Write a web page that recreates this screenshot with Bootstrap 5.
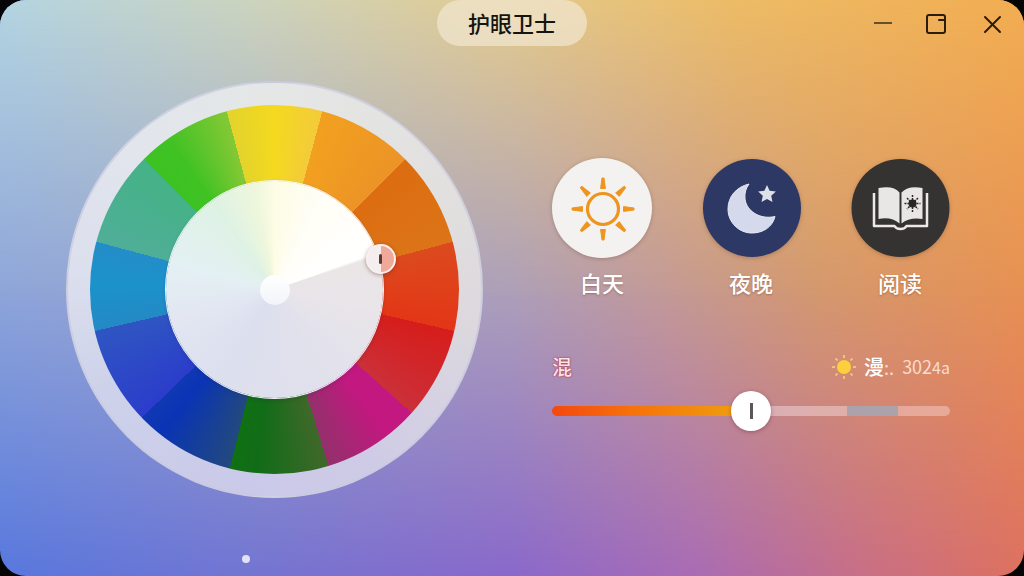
<!DOCTYPE html>
<html lang="zh-CN">
<head>
<meta charset="utf-8">
<meta name="viewport" content="width=device-width, initial-scale=1">
<title>护眼卫士</title>
<link rel="stylesheet" href="https://cdn.jsdelivr.net/npm/bootstrap@5.3.0/dist/css/bootstrap.min.css">
<style>
  body {
    background: #050505;
    font-family: "Noto Sans CJK SC", sans-serif;
  }
  /* Window background: three horizontal ramps blended from top to bottom */
  .app-window {
    isolation: isolate;
    border-radius: 26px;
    background: linear-gradient(90deg, #5878de 0%, #7475d2 25%, #8a69cb 50%, #aa6cb4 68%, #c86f87 84%, #de7160 100%);
  }
  .app-window::before, .app-window::after {
    content: "";
    position: absolute;
    inset: 0;
    z-index: -1;
  }
  .app-window::before {
    background: linear-gradient(90deg, #8ea5d9 0%, #9aa3cb 25%, #ad9fb9 50%, #c09a9c 63%, #d4986f 80%, #e79053 100%);
    -webkit-mask-image: linear-gradient(#000 50%, transparent 100%);
    mask-image: linear-gradient(#000 50%, transparent 100%);
  }
  .app-window::after {
    background: linear-gradient(90deg, #b3d4e1 0%, #ccd3bd 25%, #e1cb92 48%, #ecbb66 72%, #f2ad51 100%);
    -webkit-mask-image: linear-gradient(#000 0%, transparent 52%);
    mask-image: linear-gradient(#000 0%, transparent 52%);
  }

  .title-bar { display: grid; grid-template-columns: 1fr 150px 1fr; }
  .title-pill {
    grid-column: 2;
    height: 46px;
    padding-bottom: 2px;
    border-radius: 23px;
    background: rgba(240, 230, 206, .74);
    color: #16140f;
    font-size: 22px;
    font-weight: 500;
  }
  .win-btn { width: 40px; height: 40px; color: #2b1c0c; }
  .win-controls { gap: 15px; padding-right: 12px; }

  .panels {
    display: grid;
    grid-template-columns: 417fr 398fr;
    column-gap: 69px;
    padding: 0 74px 0 66px;
  }

  .dial-ring {
    aspect-ratio: 1;
    padding: 22px;
    background: conic-gradient(#e5e7e6, #e2e0de 60deg, #dcd8de 100deg, #cfcbe6 150deg, #cac9e9 190deg, #cdd2ea 240deg, #dcdfed 275deg, #e2e6ec 320deg, #e5e7e6);
    border: 2px solid rgba(200, 202, 222, .75);
    max-width: 560px;
  }
  .dial-hues {
    padding: 76px;
    background: conic-gradient(
      #f4d91f 0deg, #f3cb3b 15deg,
      #f2a01f 15deg, #ec9427 45deg,
      #dc6d10 45deg, #dc7418 75deg,
      #dc4a1e 75deg, #e33617 103deg,
      #d61d1b 103deg, #cb3039 132deg,
      #c4187f 132deg, #c2187f 142deg, #93306c 163deg,
      #40682a 163deg, #126c18 185deg, #107013 194deg,
      #22497e 194deg, #0a34b4 218deg, #1038b4 226deg,
      #2b3dcb 226deg, #2f55c2 257deg,
      #2489c5 257deg, #1b92cb 272deg, #248dc8 285deg,
      #4fae98 285deg, #45b286 315deg,
      #3bc322 315deg, #41c224 325deg, #85c835 345deg,
      #e3d32c 345deg, #f4d91f 360deg);
  }
  .dial-core {
    background: conic-gradient(#fdfce4 0deg, #fffef6 25deg, #ffffff 70deg, #eae5e7 72deg, #e9e5e9 100deg, #e1e1ec 150deg, #dcdfee 210deg, #e2e7f2 255deg, #e4f0f3 285deg, #def2e4 325deg, #eff7dc 350deg, #fdfce4 360deg);
    box-shadow: 0 0 0 1px #f4f6fa, 0 2px 4px rgba(40, 30, 80, .25);
  }
  .dial-hub { width: 30px; height: 30px; background: linear-gradient(#fff, #f1f4fa); }
  /* The handle rides on the edge of the core */
  .dial-handle {
    left: 99%;
    top: 36%;
    width: 30px;
    height: 30px;
    border: 2px solid #fbeeee;
    background: linear-gradient(90deg, #f4eeee 50%, #f0a898 50%);
    box-shadow: 0 1px 4px rgba(80, 40, 20, .45);
  }
  .dial-handle::after { content: ""; width: 3px; height: 10px; background: #5a3a32; border-radius: 2px; }

  .controls { padding-top: 10px; }
  .mode-btn { width: 100px; color: #fff; font-size: 22px; font-weight: 500; line-height: 28px; }
  .mode-btn svg { filter: drop-shadow(0 1px 2px rgba(80, 50, 40, .3)); }
  .mode-name { margin-top: 6px; text-shadow: 0 1px 2px rgba(110, 60, 50, .45); }

  .level-row { margin-top: 58px; line-height: 24px; font-size: 20px; }
  .level-name { color: #fbe3e6; font-weight: 500; text-shadow: 0 0 2px #b0283c, 0 0 1px #b0283c; }
  .level-text { color: #fff; font-weight: 500; }
  .level-num { color: #f8dcd0; font-size: 18px; }
  .level-unit { font-size: 16px; }

  .level-slider {
    -webkit-appearance: none;
    appearance: none;
    height: 40px;
    margin-top: 12px;
    background: transparent;
  }
  .level-slider::-webkit-slider-runnable-track {
    height: 10px;
    border-radius: 5px;
    background: linear-gradient(90deg, #f4480f 0%, #f5720c 20%, #f09a10 45%, #e8b010 50%, rgba(240, 215, 218, .5) 50%, rgba(240, 215, 218, .5) 74%, #aba2ab 74%, #aba2ab 87%, rgba(244, 205, 200, .5) 87%);
  }
  .level-slider::-webkit-slider-thumb {
    -webkit-appearance: none;
    width: 40px;
    height: 40px;
    margin-top: -15px;
    border-radius: 50%;
    background: linear-gradient(#5c5658, #5c5658) center / 3px 16px no-repeat #fff;
    box-shadow: 0 1px 4px rgba(80, 30, 50, .4);
  }

  .page-dots { height: 43px; padding: 8px 0 0 242px; }
  .page-dot { width: 8px; height: 8px; background: #e2e2f6; }

  @media (max-width: 800px) {
    .panels { grid-template-columns: 1fr; padding: 24px; row-gap: 24px; }
  }
</style>
</head>
<body>
<div class="app-window position-relative overflow-hidden min-vh-100 d-flex flex-column">

  <header class="title-bar">
    <h1 class="title-pill d-flex align-items-center justify-content-center m-0">护眼卫士</h1>
    <div class="win-controls d-flex justify-content-end align-items-center">
      <button type="button" class="win-btn btn border-0 p-0" aria-label="最小化">
        <svg width="24" height="24" viewBox="0 0 24 24" fill="none" stroke="currentColor" stroke-width="2"><path d="M4 11h18" stroke="#66502c"/></svg>
      </button>
      <button type="button" class="win-btn btn border-0 p-0" aria-label="最大化">
        <svg width="24" height="24" viewBox="0 0 24 24" fill="none" stroke="currentColor" stroke-width="2" stroke-linecap="round"><rect x="2" y="3" width="18" height="18" rx="2"/><path d="M14 8h5"/></svg>
      </button>
      <button type="button" class="win-btn btn border-0 p-0" aria-label="关闭">
        <svg width="24" height="24" viewBox="0 0 24 24" fill="none" stroke="currentColor" stroke-width="2" stroke-linecap="round"><path d="M5 5l15 15M20 5L5 20"/></svg>
      </button>
    </div>
  </header>

  <main class="panels flex-grow-1 align-items-center">
    <section class="dial-ring rounded-circle" aria-label="色温">
      <div class="dial-hues rounded-circle w-100 h-100">
        <div class="dial-core rounded-circle position-relative w-100 h-100 d-flex align-items-center justify-content-center">
          <span class="dial-hub rounded-circle"></span>
          <button type="button" class="dial-handle position-absolute translate-middle rounded-circle p-0 d-flex align-items-center justify-content-center" aria-label="色温手柄"></button>
        </div>
      </div>
    </section>

    <section class="controls">
      <div class="d-flex justify-content-between">
        <button type="button" class="mode-btn btn border-0 p-0 d-flex flex-column align-items-center">
          <svg width="100" height="104" viewBox="0 0 100 104" aria-hidden="true">
            <circle cx="50" cy="50" r="50" fill="#f4f2f0"/>
            <circle cx="51" cy="51" r="15.500" fill="none" stroke="#ee951f" stroke-width="3.200"/>
            <g fill="#ee951f" stroke="#ee951f" stroke-width="1" stroke-linejoin="round" transform="translate(51 51)">
              <path id="ray" d="M-2.400-20.500L-1-31h2L2.400-20.500z"/>
              <use href="#ray" transform="rotate(45)"/><use href="#ray" transform="rotate(90)"/>
              <use href="#ray" transform="rotate(135)"/><use href="#ray" transform="rotate(180)"/>
              <use href="#ray" transform="rotate(225)"/><use href="#ray" transform="rotate(270)"/>
              <use href="#ray" transform="rotate(315)"/>
            </g>
          </svg>
          <span class="mode-name">白天</span>
        </button>
        <button type="button" class="mode-btn btn border-0 p-0 d-flex flex-column align-items-center">
          <svg width="100" height="104" viewBox="0 0 100 104" aria-hidden="true">
            <circle cx="51" cy="50" r="49" fill="#2d3864"/>
            <path d="M48 26C35 29 27 39 27 51C27 64.500 38 75 51 75C62 75 71.500 69 74 58.500C59 62 45.500 53 44 41C43.400 35 45 30 48 26z" fill="#d5d9ec" stroke="#e6e9f6" stroke-width="1"/>
            <path d="M66 27l2.600 5.800 6.300.7-4.700 4.300 1.300 6.200-5.500-3.100-5.500 3.100 1.300-6.200-4.700-4.300 6.300-.7z" fill="#dfe1ea"/>
          </svg>
          <span class="mode-name">夜晚</span>
        </button>
        <button type="button" class="mode-btn btn border-0 p-0 d-flex flex-column align-items-center">
          <svg width="100" height="104" viewBox="0 0 100 104" aria-hidden="true">
            <circle cx="50.500" cy="50" r="49" fill="#353332"/>
            <path d="M24 35v33h20.500q1.500 3 6 3t6-3H77V35" fill="none" stroke="#ece9e7" stroke-width="2.500" stroke-linejoin="round"/>
            <path d="M28.500 30q15-3 21 4.500v31q-8-7-21-4.500zM51.500 34.500q7-7.500 21-4.500v31q-13-2-21 4.500z" fill="#e9e7e5"/>
            <circle cx="62.500" cy="45.500" r="4" fill="#292726"/>
            <path d="M62.500 37v17M54.500 45.500h16M57 40l11 11M68 40L57 51" stroke="#292726" stroke-width="1.500" stroke-dasharray="2 1"/>
          </svg>
          <span class="mode-name">阅读</span>
        </button>
      </div>

      <div class="level-row d-flex justify-content-between align-items-center">
        <label for="level" class="level-name">混</label>
        <output for="level" class="d-flex align-items-center">
          <svg width="24" height="24" viewBox="0 0 24 24" class="me-2" aria-hidden="true">
            <circle cx="12" cy="12" r="7" fill="#fbd03c"/>
            <path d="M12 0v3M12 21v3M0 12h3M21 12h3M3.500 3.500l2 2M18.500 18.500l2 2M3.500 20.500l2-2M18.500 5.500l2-2" stroke="#f7d486" stroke-width="1.500"/>
          </svg>
          <span class="level-text">漫</span>
          <span class="level-num">:.</span>
          <span class="level-num ms-2">302<span class="level-unit">4a</span></span>
        </output>
      </div>
      <input type="range" id="level" class="level-slider d-block w-100" min="0" max="100" value="50">
    </section>
  </main>

  <footer class="page-dots d-flex align-items-center">
    <span class="page-dot rounded-circle"></span>
  </footer>
</div>
<script src="https://cdn.jsdelivr.net/npm/bootstrap@5.3.0/dist/js/bootstrap.bundle.min.js"></script>
</body>
</html>
